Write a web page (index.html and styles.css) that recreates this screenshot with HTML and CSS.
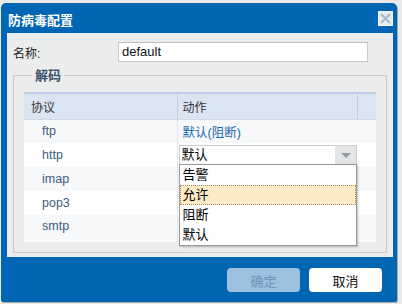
FILE: index.html
```html
<!doctype html>
<html lang="zh-CN">
  <head>
    <meta charset="UTF-8" />
    <title>防病毒配置</title>
    <link rel="stylesheet" href="styles.css">
  </head>
  <body>
    <div class="dialog">
      <div class="titlebar">
        <span class="title">防病毒配置</span>
        <span class="close">
          <svg width="13" height="13" viewBox="0 0 13 13">
            <path d="M2 2 L11 11 M11 2 L2 11" stroke="#a9b8c8" stroke-width="2" fill="none" />
          </svg>
        </span>
      </div>

      <div class="panel">
        <div class="name-row">
          <label class="name-label">名称:</label>
          <div class="name-input">default</div>
        </div>

        <fieldset class="decode">
          <legend>解码</legend>
          <table class="grid">
            <thead>
              <tr>
                <th class="col-proto">协议</th>
                <th class="col-action">动作</th>
                <th class="col-pad"></th>
              </tr>
            </thead>
            <tbody>
              <tr class="alt">
                <td class="proto">ftp</td>
                <td class="action"><span class="link">默认(阻断)</span></td>
                <td></td>
              </tr>
              <tr>
                <td class="proto">http</td>
                <td class="action editing">
                  <div class="select">
                    <span class="select-value">默认</span>
                    <span class="select-btn"></span>
                  </div>
                  <ul class="options">
                    <li>告警</li>
                    <li class="hover">允许</li>
                    <li>阻断</li>
                    <li>默认</li>
                  </ul>
                </td>
                <td></td>
              </tr>
              <tr class="alt">
                <td class="proto">imap</td>
                <td class="action"></td>
                <td></td>
              </tr>
              <tr>
                <td class="proto">pop3</td>
                <td class="action"></td>
                <td></td>
              </tr>
              <tr class="alt last">
                <td class="proto">smtp</td>
                <td class="action"></td>
                <td></td>
              </tr>
            </tbody>
          </table>
        </fieldset>
      </div>

      <div class="footer">
        <button class="btn btn-disabled">确定</button>
        <button class="btn">取消</button>
      </div>
    </div>
  </body>
</html>
```

FILE: styles.css
```css
* {
  margin: 0;
  padding: 0;
  box-sizing: border-box;
}

body {
  font-family: "Liberation Sans", "Noto Sans CJK SC", sans-serif;
  font-size: 12px;
  background: #e9e9e9;
  color: #222;
  width: 402px;
  height: 304px;
  overflow: hidden;
}

.dialog {
  width: 396px;
  height: 299px;
  margin: 3px 0 0 1px;
  padding: 0 4px 0 6px;
  background: #0065b2;
  border-radius: 5px 5px 2px 2px;
  box-shadow: 1px 1px 0 #a9acaf;
  display: flex;
  flex-direction: column;
}

.titlebar {
  height: 30px;
  display: flex;
  align-items: center;
  justify-content: space-between;
  padding: 2px 0 0 1px;
}

.title {
  color: #fff;
  font-weight: bold;
  font-size: 13px;
  font-family: "Noto Sans CJK SC", sans-serif;
}

.close {
  width: 15px;
  height: 15px;
  margin-top: -2px;
  background: #e3ebf3;
  border: 1px solid #f4f7fa;
  display: flex;
  align-items: center;
  justify-content: center;
}

.panel {
  height: 224px;
  background: #ebecec;
  padding: 9px 6px 0 6px;
}

.name-row {
  display: flex;
  align-items: center;
  height: 20px;
}

.name-label {
  width: 105px;
  font-size: 12px;
  color: #222;
}

.name-input {
  width: 250px;
  height: 20px;
  background: #fff;
  border: 1px solid #c8c8c8;
  border-top-color: #bdbdbd;
  font-size: 13px;
  line-height: 18px;
  padding-left: 3px;
  color: #111;
}

.decode {
  margin-top: 5px;
  border: 1px solid #c9cbcb;
  padding: 9px 10px 10px 10px;
  height: 186px;
}

.decode legend {
  margin-left: 8px;
  padding: 0 3px;
  font-size: 13px;
  font-weight: bold;
  line-height: 16px;
  color: #3b5269;
  font-family: "Noto Sans CJK SC", sans-serif;
}

.grid {
  width: 352px;
  border-collapse: collapse;
  table-layout: fixed;
}

.grid th {
  height: 26px;
  background: #dbe5f1;
  border-top: 2px solid #bcd0e8;
  border-bottom: 1px solid #d2d9e1;
  font-weight: normal;
  text-align: left;
  font-size: 12px;
  color: #333;
  padding-left: 7px;
}

.grid .col-proto {
  width: 153px;
}

.grid .col-action {
  width: 180px;
  border-left: 1px solid #c6ced8;
  padding-left: 5px;
}

.grid .col-pad {
  width: 19px;
  border-left: 1px solid #c6ced8;
}

.grid td {
  height: 24px;
  background: #fff;
  font-size: 12.5px;
}

.grid tr.alt td {
  background: #f7f8fa;
}

.grid tr.last td {
  height: 27px;
  vertical-align: top;
  padding-top: 4px;
}

.grid .proto {
  padding-left: 18px;
  color: #3e5d7e;
}

.grid .action {
  border-left: 1px solid #e3e7eb;
  padding-left: 5px;
}

.link {
  color: #1b68ab;
  font-size: 12.5px;
}

.grid .editing {
  position: relative;
  padding: 0 0 0 1px;
}

.select {
  display: flex;
  height: 20px;
  background: #fff;
  border: 1px solid #cdcdcd;
}

.select-value {
  flex: 1;
  font-size: 13px;
  line-height: 18px;
  padding-left: 2px;
  color: #000;
}

.select-btn {
  width: 21px;
  background: #e4e5e6;
  display: flex;
  align-items: center;
  justify-content: center;
}

.select-btn::after {
  content: "";
  border-left: 5px solid transparent;
  border-right: 5px solid transparent;
  border-top: 5px solid #8c9aa8;
}

.options {
  position: absolute;
  left: 1px;
  top: 21px;
  width: 178px;
  list-style: none;
  background: #fff;
  border: 1px solid #9a9a9a;
  box-shadow: 1px 1px 2px rgba(0, 0, 0, 0.25);
  z-index: 2;
}

.options li {
  height: 20px;
  line-height: 20px;
  padding-left: 3px;
  font-size: 13px;
  color: #000;
}

.options li.hover {
  background: #feebc6;
  border: 1px dotted #9c8a6a;
  line-height: 18px;
  padding-left: 2px;
}

.footer {
  flex: 1;
  display: flex;
  justify-content: flex-end;
  align-items: flex-start;
  gap: 9px;
  padding: 11px 11px 0 0;
}

.btn {
  width: 73px;
  height: 24px;
  border: none;
  border-radius: 4px;
  background: #fff;
  color: #111;
  font-family: "Noto Sans CJK SC", sans-serif;
  font-size: 13px;
}

.btn-disabled {
  background: #9bc0e0;
  color: #6e93b6;
}
```
